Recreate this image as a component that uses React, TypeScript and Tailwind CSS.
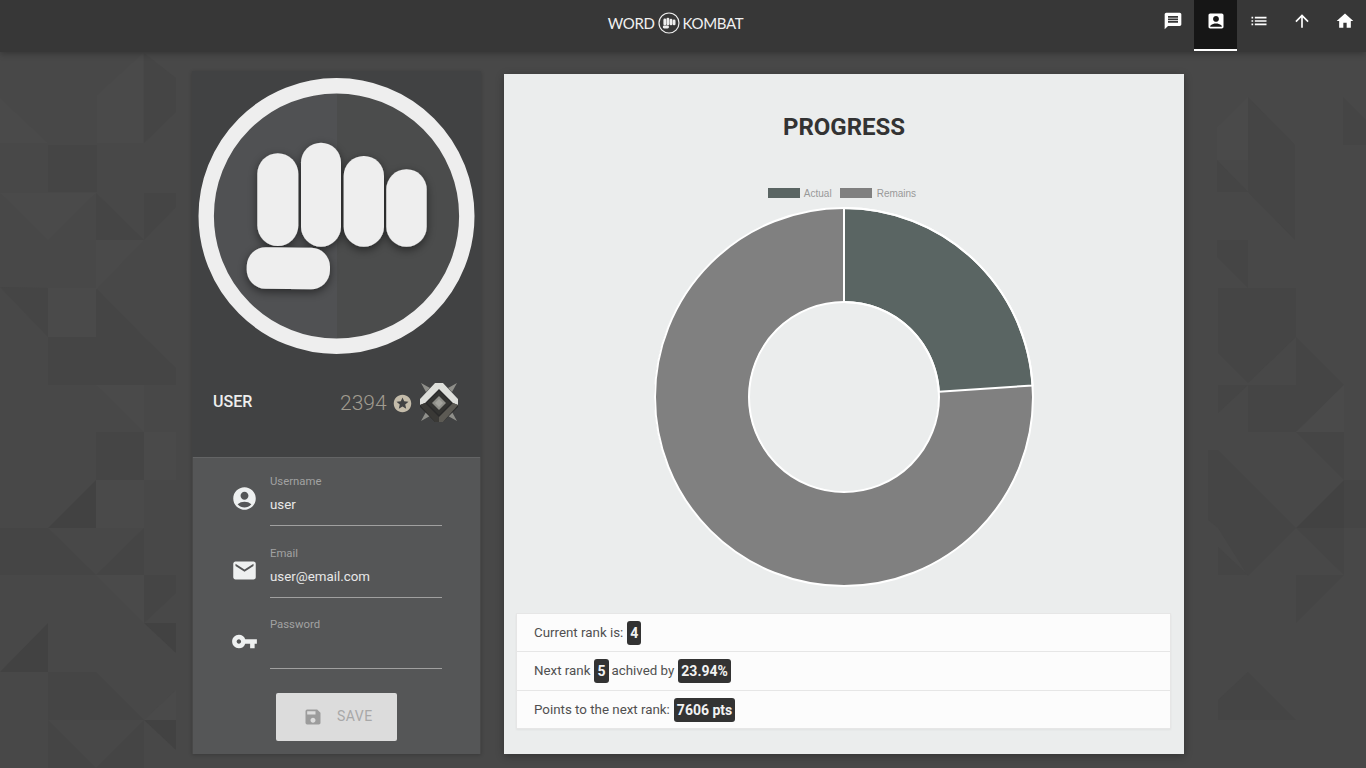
import { MdAccountBox, MdAccountCircle, MdArrowUpward, MdEmail, MdHome, MdList, MdMessage, MdSave, MdStars, MdVpnKey } from 'react-icons/md';
import type { ComponentType, ReactNode } from 'react';

const darkTiles = [
    '144,53 144,143 176,112 176,78',
    '48,145 97,145 97,192 48,192',
    '96,193 96,240 144,240',
    '144,193 176,193 176,207 144,240',
    '0,287 48,337 48,288',
    '48,337 96,337 96,288 144,337 176,368 176,385 48,385',
    '96,432 144,432 144,480 96,480',
    '0,528 48,528 48,575 0,575',
    '48,528 96,575 48,575',
    '96,575 144,528 144,575',
    '144,575 176,575 176,593 144,623',
    '48,672 96,672 144,720 48,720',
    '48,720 96,768 48,768',
    '96,768 144,720 144,768',
    '1248,97 1295,145 1295,192 1248,192',
    '1217,160 1248,192 1217,192',
    '1248,192 1295,192 1295,240',
    '1343,97 1366,120 1366,145 1343,145',
    '1217,240 1248,240 1248,288 1217,257',
    '1218,288 1296,288 1296,337 1248,383 1218,353',
    '1296,337 1344,385 1296,432',
    '1248,385 1296,385 1296,432 1248,432',
    '1218,413 1248,385 1218,385',
    '1296,432 1344,480 1344,432',
    '1218,450 1296,528 1248,576 1218,528 1208,520 1208,450',
    '1296,528 1344,575 1344,528',
    '1218,547 1248,575 1218,575',
    '1296,575 1344,575 1296,623',
    '1218,700 1248,672 1296,720 1218,720',
    '1344,480 1366,480 1366,528 1344,528',
];

const darkerTiles = [
    '48,528 96,480 96,528',
    '1296,528 1344,480 1344,528',
    '0,672 48,623 48,672',
    '144,623 176,653 176,623',
    '144,720 176,750 176,720',
];

const lightTiles = [
    '97,95 143,53 143,143 97,143',
    '0,98 48,143 0,143',
    '0,193 96,193 48,240',
    '96,240 144,240 96,290',
    '48,288 96,288 96,337 48,337',
    '96,385 144,385 144,432',
    '144,432 176,432 176,480 144,480',
    '96,480 144,480 144,528 96,528',
    '96,575 144,575 144,623',
    '144,720 176,690 176,720',
    '1296,432 1344,385 1344,432',
    '1217,127 1248,97 1248,160 1217,160',
];

const navItems: { icon: ComponentType<{ className?: string }>; active?: boolean }[] = [
    { icon: MdMessage },
    { icon: MdAccountBox, active: true },
    { icon: MdList },
    { icon: MdArrowUpward },
    { icon: MdHome },
];

function Background() {
    return (
        <svg className="absolute inset-0 h-[768px] w-[1366px]" viewBox="0 0 1366 768">
            {darkTiles.map((p) => (
                <polygon key={p} points={p} fill="#454545" />
            ))}
            {darkerTiles.map((p) => (
                <polygon key={p} points={p} fill="#424242" />
            ))}
            {lightTiles.map((p) => (
                <polygon key={p} points={p} fill="#4a4a4a" />
            ))}
        </svg>
    );
}

function FistMark() {
    return (
        <svg className="mx-[3px] h-[22px] w-[22px]" viewBox="0 0 22 22">
            <circle cx="11" cy="11" r="10" fill="none" stroke="#eeeeee" strokeWidth="1.2" />
            <rect x="5.4" y="6.6" width="2.8" height="6.6" rx="1.3" fill="#eeeeee" />
            <rect x="8.5" y="5.8" width="2.8" height="7.4" rx="1.3" fill="#eeeeee" />
            <rect x="11.6" y="6.8" width="2.8" height="6.4" rx="1.3" fill="#eeeeee" />
            <rect x="14.7" y="7.6" width="2.8" height="5.6" rx="1.3" fill="#eeeeee" />
            <rect x="4.8" y="13.5" width="6.2" height="3" rx="1.4" fill="#eeeeee" />
        </svg>
    );
}

function Header() {
    return (
        <header className="relative z-10 flex h-[52px] items-start bg-[#373737] shadow-[0_2px_6px_rgba(0,0,0,0.25)]">
            <div className="flex h-[46px] flex-1 items-center justify-center pl-[200px] font-['Lato',sans-serif] text-[15px] font-normal tracking-[-0.35px] text-[#f0f0f0]">
                <span>WORD</span>
                <FistMark />
                <span>KOMBAT</span>
            </div>
            <nav className="flex">
                {navItems.map(({ icon: Icon, active }, i) => (
                    <div
                        key={i}
                        className={`flex h-[51px] w-[43px] items-start justify-center pt-[11px] text-white ${active ? 'border-b-[2px] border-white bg-[#161616]' : ''}`}
                    >
                        <Icon className="h-[20px] w-[20px]" />
                    </div>
                ))}
            </nav>
        </header>
    );
}

function Avatar() {
    return (
        <svg className="h-[277px] w-[277px]" viewBox="198 78 277 277">
            <defs>
                <clipPath id="disc">
                    <circle cx="336.5" cy="216" r="125" />
                </clipPath>
                <filter id="fistShadow" x="-30%" y="-30%" width="160%" height="160%">
                    <feDropShadow dx="0" dy="3" stdDeviation="5" floodColor="#000000" floodOpacity="0.5" />
                </filter>
            </defs>
            <g clipPath="url(#disc)">
                <rect x="198" y="78" width="139" height="277" fill="#505153" />
                <rect x="337" y="78" width="138" height="277" fill="#4b4c4c" />
            </g>
            <circle cx="336.5" cy="216" r="130.3" fill="none" stroke="#eeeeee" strokeWidth="15.4" />
            <g fill="#eeeeee" filter="url(#fistShadow)">
                <rect x="257.3" y="153.3" width="41" height="92.7" rx="20.5" />
                <rect x="301" y="142.7" width="40" height="104" rx="20" />
                <rect x="343.7" y="156" width="40.3" height="90.7" rx="20" />
                <rect x="386.3" y="169.3" width="40.4" height="77.4" rx="20" />
                <rect x="246.7" y="247.5" width="83.3" height="41.5" rx="19" transform="rotate(0.8 288 268)" />
            </g>
        </svg>
    );
}

function RankBadge() {
    return (
        <svg className="h-[44px] w-[42px]" viewBox="0 0 42 44">
            <g fill="#8f8f8a">
                <polygon points="3,2 12,7 8,11" />
                <polygon points="39,2 30,7 34,11" />
                <polygon points="3,40 8,31 12,35" />
                <polygon points="39,40 34,31 30,35" />
            </g>
            <polygon points="17,2 25,2 40,18 40,26 25,41 17,41 2,26 2,18" fill="#2a2a2a" />
            <polygon points="17,2 25,2 40,18 40,24 35,22 21,8 7,22 2,24 2,18" fill="#dedfdb" />
            <polygon points="2,24 7,22 21,36 21,41 17,41" fill="#3a3936" />
            <polygon points="40,24 35,22 21,36 21,41 25,41" fill="#5c5a54" />
            <polygon points="21,10 33,22 21,34 9,22" fill="#333331" />
            <polygon points="21,15 28,22 21,29 14,22" fill="#8e8e88" />
            <polygon points="21,18 25,22 21,26 17,22" fill="#a3a39d" />
        </svg>
    );
}

function Field({ icon, label, value }: { icon: ReactNode; label: string; value?: string }) {
    return (
        <div className="flex h-[71.5px] items-start pl-[38px]">
            <div className="mt-[13px] w-[39px] text-[#eef0f0]">{icon}</div>
            <div className="w-[172px]">
                <div className="h-[48px] text-[11.33px] leading-[18px] text-[#a2a2a2]">
                    {label}
                    <div className="mt-[5px] h-[20px] text-[13.33px] leading-[20px] text-[#e8e8e8]">{value}</div>
                </div>
                <div className="mt-[5px] h-px bg-[#a0a0a0]" />
            </div>
        </div>
    );
}

function ProfilePanel() {
    return (
        <aside className="mt-[19px] w-[289px] shadow-[0_1px_4px_rgba(0,0,0,0.2)]">
            <div className="h-[386px] bg-[#414243] pl-[6px] pt-[7px]">
                <Avatar />
                <div className="mt-[26px] flex items-center pl-[15px]">
                    <span className="w-[127px] pb-[2px] text-[16px] font-medium text-[#eeeeee]">USER</span>
                    <span className="pt-[2px] text-[21px] font-light text-[#a09b8f]">2394</span>
                    <MdStars className="ml-[5px] h-[21px] w-[21px] text-[#c4bcaa]" />
                    <span className="ml-[5px]">
                        <RankBadge />
                    </span>
                </div>
            </div>
            <div className="ml-px h-[297px] w-[287px] border-t border-[#636465] bg-[#555657] pt-[14px]">
                <Field icon={<MdAccountCircle className="h-[27px] w-[27px]" />} label="Username" value="user" />
                <Field icon={<MdEmail className="h-[27px] w-[27px]" />} label="Email" value="user@email.com" />
                <Field icon={<MdVpnKey className="h-[27px] w-[27px]" />} label="Password" />
                <button className="ml-[83px] mt-[6px] flex h-[48px] w-[121px] items-center rounded-[2px] bg-[#dcdcdc] pl-[27px] text-[14px] font-normal tracking-[0.5px] text-[#a8a8a8]">
                    <MdSave className="h-[20px] w-[20px] text-[#9c9c9c]" />
                    <span className="ml-[14px]">SAVE</span>
                </button>
            </div>
        </aside>
    );
}

function Donut() {
    return (
        <svg className="mx-auto h-[382px] w-[382px]" viewBox="0 0 382 382">
            {/* 23.94% of the circle, starting at 12 o'clock */}
            <path d="M191 2 A189 189 0 1 1 190 2 L190 96 A95 95 0 1 0 191 96 Z" fill="#808080" />
            <path d="M191 2 A189 189 0 0 1 379.6 179.4 L285.8 185.7 A95 95 0 0 0 191 96 Z" fill="#5a6563" stroke="#ffffff" strokeWidth="2" strokeLinejoin="round" />
            <circle cx="191" cy="191" r="189" fill="none" stroke="#ffffff" strokeWidth="2" />
            <circle cx="191" cy="191" r="95" fill="none" stroke="#ffffff" strokeWidth="2" />
        </svg>
    );
}

function Badge({ children }: { children: ReactNode }) {
    return <span className="ml-[4px] mr-[3px] inline-block h-[24px] rounded-[3px] bg-[#333333] px-[3px] text-[14px] font-bold leading-[24px] text-[#f2f2f2]">{children}</span>;
}

function ProgressCard() {
    return (
        <section className="ml-[23px] mt-[22px] h-[680px] w-[680px] bg-[#ebeded] px-[12px] pt-[37px] shadow-[0_2px_8px_rgba(0,0,0,0.3)]">
            <h2 className="text-center text-[24px] font-bold leading-[32px] text-[#333333]">PROGRESS</h2>
            <div className="mt-[44px] flex h-[12px] items-center justify-center pr-[4px] font-['Liberation_Sans',sans-serif] text-[10px] text-[#999999]">
                <span className="h-[10px] w-[32px] bg-[#5a6563]" />
                <span className="ml-[4px]">Actual</span>
                <span className="ml-[8px] h-[10px] w-[32px] bg-[#808080]" />
                <span className="ml-[5px]">Remains</span>
            </div>
            <div className="mt-[7px]">
                <Donut />
            </div>
            <ul className="mt-[25px] w-[655px] border border-[#e6e6e6] bg-[#fcfcfc] text-[13.33px] text-[#505050] shadow-[0_1px_2px_rgba(0,0,0,0.05)]">
                <li className="flex h-[38px] items-center border-b border-[#e6e6e6] pl-[17px]">
                    Current rank is:<Badge>4</Badge>
                </li>
                <li className="flex h-[39px] items-center border-b border-[#e6e6e6] pl-[17px]">
                    Next rank<Badge>5</Badge>achived by<Badge>23.94%</Badge>
                </li>
                <li className="flex h-[37px] items-center pl-[17px]">
                    Points to the next rank:<Badge>7606 pts</Badge>
                </li>
            </ul>
        </section>
    );
}

export default function App() {
    return (
        <div className="relative h-[768px] w-[1366px] overflow-hidden bg-[#484848] font-['Roboto',sans-serif]">
            <Background />
            <div className="relative">
                <Header />
                <main className="flex pl-[192px]">
                    <ProfilePanel />
                    <ProgressCard />
                </main>
            </div>
        </div>
    );
}
